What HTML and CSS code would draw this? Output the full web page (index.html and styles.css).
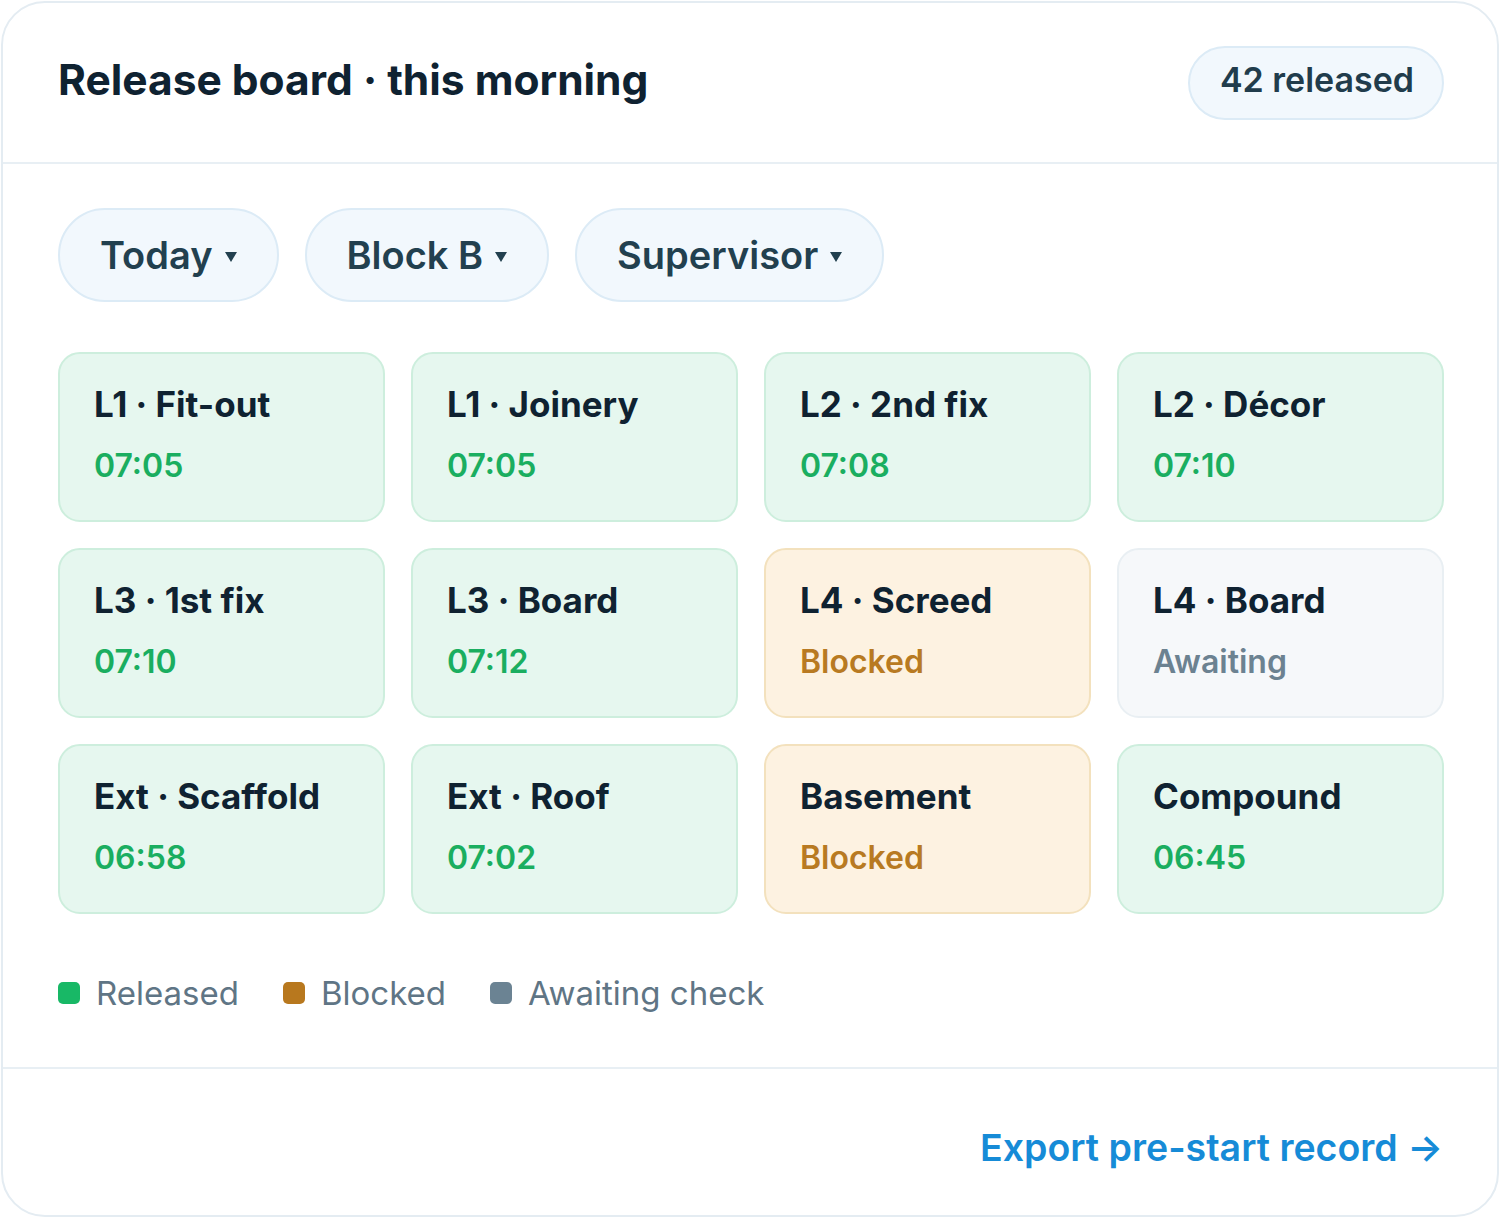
FILE: index.html
```html
<!DOCTYPE html>
<html>

<head>
    <title>Release board</title>
    <link rel="stylesheet" href="styles.css">
</head>

<body>
    <div class="board">
        <header class="board-head">
            <h1>Release board · this morning</h1>
            <span class="count-pill">42 released</span>
        </header>

        <main class="board-body">
            <div class="filters">
                <button class="filter">Today <svg class="caret" viewBox="0 0 12 10"><path d="M0 0h12L6 10z" /></svg></button>
                <button class="filter">Block B <svg class="caret" viewBox="0 0 12 10"><path d="M0 0h12L6 10z" /></svg></button>
                <button class="filter">Supervisor <svg class="caret" viewBox="0 0 12 10"><path d="M0 0h12L6 10z" /></svg></button>
            </div>

            <div class="zones">
                <div class="zone released">
                    <div class="zone-name">L1 · Fit-out</div>
                    <div class="zone-state">07:05</div>
                </div>
                <div class="zone released">
                    <div class="zone-name">L1 · Joinery</div>
                    <div class="zone-state">07:05</div>
                </div>
                <div class="zone released">
                    <div class="zone-name">L2 · 2nd fix</div>
                    <div class="zone-state">07:08</div>
                </div>
                <div class="zone released">
                    <div class="zone-name">L2 · Décor</div>
                    <div class="zone-state">07:10</div>
                </div>
                <div class="zone released">
                    <div class="zone-name">L3 · 1st fix</div>
                    <div class="zone-state">07:10</div>
                </div>
                <div class="zone released">
                    <div class="zone-name">L3 · Board</div>
                    <div class="zone-state">07:12</div>
                </div>
                <div class="zone blocked">
                    <div class="zone-name">L4 · Screed</div>
                    <div class="zone-state">Blocked</div>
                </div>
                <div class="zone awaiting">
                    <div class="zone-name">L4 · Board</div>
                    <div class="zone-state">Awaiting</div>
                </div>
                <div class="zone released">
                    <div class="zone-name">Ext · Scaffold</div>
                    <div class="zone-state">06:58</div>
                </div>
                <div class="zone released">
                    <div class="zone-name">Ext · Roof</div>
                    <div class="zone-state">07:02</div>
                </div>
                <div class="zone blocked">
                    <div class="zone-name">Basement</div>
                    <div class="zone-state">Blocked</div>
                </div>
                <div class="zone released">
                    <div class="zone-name">Compound</div>
                    <div class="zone-state">06:45</div>
                </div>
            </div>

            <div class="legend">
                <span class="key"><i class="dot released"></i>Released</span>
                <span class="key"><i class="dot blocked"></i>Blocked</span>
                <span class="key"><i class="dot awaiting"></i>Awaiting check</span>
            </div>
        </main>

        <footer class="board-foot">
            <a class="export" href="#">Export pre-start record →</a>
        </footer>
    </div>
</body>

</html>
```

FILE: styles.css
```css
* {
    box-sizing: border-box;
}

body {
    font-family: Inter, "Noto Sans", sans-serif;
    background-color: #fff;
    margin: 0;
    padding: 1px;
}

.board {
    height: 1216px;
    border: 2px solid #e4ecf2;
    border-radius: 44px;
    display: flex;
    flex-direction: column;
}

.board-head {
    height: 161px;
    padding: 0 53px 6px 55px;
    display: flex;
    align-items: center;
    justify-content: space-between;
    border-bottom: 2px solid #e8eff4;
}

h1 {
    margin: 0;
    font-size: 42.5px;
    font-weight: 700;
    color: #0f2231;
}

.count-pill {
    height: 74px;
    margin-top: 6px;
    padding: 0 28px 6px 30px;
    display: flex;
    align-items: center;
    font-size: 34px;
    font-weight: 600;
    color: #213c4c;
    background-color: #f2f8fd;
    border: 2px solid #dcebf6;
    border-radius: 37px;
}

.board-body {
    flex: 1;
    padding: 44px 53px 0 55px;
    border-bottom: 2px solid #e8eff4;
}

.filters {
    display: flex;
    gap: 26px;
}

.filter {
    height: 94px;
    padding: 0 40px 0 40px;
    display: flex;
    align-items: center;
    gap: 12px;
    font-family: inherit;
    font-size: 38px;
    font-weight: 600;
    color: #22404f;
    background-color: #f2f8fd;
    border: 2px solid #dcebf6;
    border-radius: 47px;
}

.caret {
    width: 12px;
    height: 10px;
    margin-top: 4px;
    fill: #22404f;
}

.zones {
    margin-top: 50px;
    display: grid;
    grid-template-columns: repeat(4, 1fr);
    gap: 26px;
}

.zone {
    height: 170px;
    padding: 28px 34px 0;
    border: 2px solid #cdeedd;
    border-radius: 22px;
    background-color: #e6f7ef;
}

.zone-name {
    font-size: 35px;
    font-weight: 700;
    line-height: 44px;
    color: #0f2231;
}

.zone-state {
    margin-top: 21px;
    font-size: 32px;
    font-weight: 600;
    line-height: 38px;
    color: #1aae60;
}

.zone.blocked {
    background-color: #fdf2e1;
    border-color: #f3e1bd;
}

.zone.blocked .zone-state {
    color: #b87a22;
}

.zone.awaiting {
    background-color: #f6f8fa;
    border-color: #e9eff3;
}

.zone.awaiting .zone-state {
    color: #6c8291;
}

.legend {
    margin-top: 59px;
    display: flex;
    gap: 44px;
}

.key {
    display: flex;
    align-items: center;
    gap: 16px;
    font-size: 33px;
    color: #5f7585;
}

.dot {
    width: 22px;
    height: 22px;
    border-radius: 5px;
    background-color: #18b866;
}

.dot.blocked {
    background-color: #b8781e;
}

.dot.awaiting {
    background-color: #6b8393;
}

.board-foot {
    height: 146px;
    padding: 10px 54px 0;
    display: flex;
    align-items: center;
    justify-content: flex-end;
}

.export {
    font-size: 37.5px;
    font-weight: 600;
    color: #168bd7;
    text-decoration: none;
}
```
